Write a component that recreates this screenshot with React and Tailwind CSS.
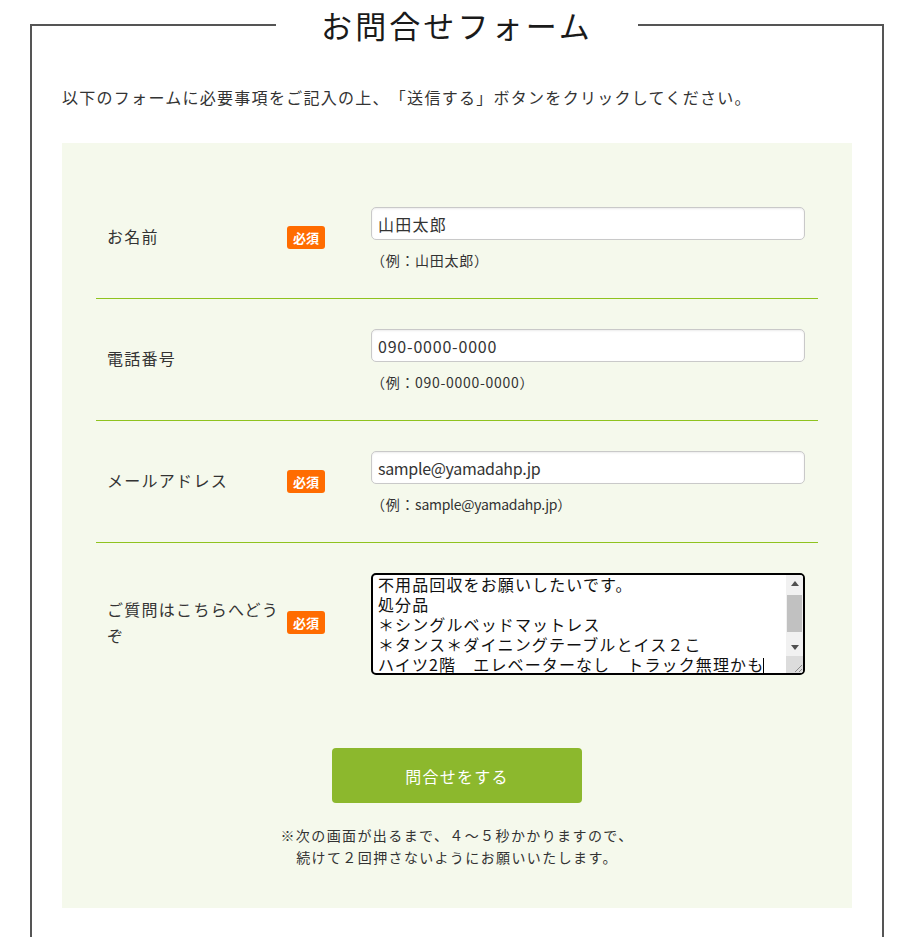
import React from "react";

const font = { fontFamily: '"Noto Sans CJK JP", "Noto Sans", sans-serif' };

function Badge() {
  return (
    <span className="inline-flex h-[23px] w-[38px] items-center justify-center rounded-[3px] bg-[#ff6c00] text-[13px] font-bold leading-none tracking-normal text-white">
      必須
    </span>
  );
}

function Row({ label, required, children, last }) {
  return (
    <div
      className={
        "flex items-center pt-[30px] pb-[28px] " +
        (last ? "" : "border-b border-[#8fc31f]")
      }
    >
      <div className="w-[191px] pl-[11px] pr-[4px] pb-[5px] text-[16px] leading-[26px] text-[#333]">
        {label}
      </div>
      <div className="w-[84px] pb-[5px]">{required ? <Badge /> : null}</div>
      <div className="w-[434px]">{children}</div>
    </div>
  );
}

function TextInput({ value, hint, inputTracking }) {
  return (
    <div>
      <input
        readOnly
        value={value}
        className={
          "block h-[33px] w-[434px] rounded-[5px] border border-[#c9c9c9] bg-white pl-[6px] text-[16px] text-[#333] shadow-[inset_0_1px_2px_rgba(0,0,0,0.08)] outline-none " +
          inputTracking
        }
      />
      <div className="mt-[10px] h-[20px] text-[14px] leading-[20px] tracking-[0.05em] text-[#333]">
        {hint}
      </div>
    </div>
  );
}

function FakeTextarea() {
  return (
    <div className="flex h-[102px] w-[434px] overflow-hidden rounded-[5px] border-2 border-black bg-white">
      <div className="flex-1 overflow-hidden pl-[5px]">
        <div className="-mt-px text-[16px] leading-[20px] tracking-[0.07em] text-[#111] whitespace-nowrap">
          <div>不用品回収をお願いしたいです。</div>
          <div>処分品</div>
          <div>＊シングルベッドマットレス</div>
          <div>＊タンス＊ダイニングテーブルとイス２こ</div>
          <div>
            ハイツ2階　エレベーターなし　トラック無理かも
            <span className="ml-[-1px] inline-block h-[18px] w-px bg-black align-middle" />
          </div>
        </div>
      </div>
      <div className="flex w-[17px] flex-col bg-[#f1f1f1]">
        <div className="flex h-[17px] items-center justify-center">
          <svg width="8" height="5" viewBox="0 0 8 5">
            <polygon points="4,0 8,5 0,5" fill="#505050" />
          </svg>
        </div>
        <div className="flex-1 px-[1px]">
          <div className="mt-[3px] h-[37px] bg-[#c1c1c1]" />
        </div>
        <div className="flex h-[17px] items-center justify-center">
          <svg width="8" height="5" viewBox="0 0 8 5">
            <polygon points="0,0 8,0 4,5" fill="#505050" />
          </svg>
        </div>
        <div className="flex h-[17px] items-end justify-end bg-[#dcdcdc]">
          <svg width="10" height="10" viewBox="0 0 10 10">
            <line x1="9" y1="2" x2="2" y2="9" stroke="#8a8a8a" strokeWidth="1" />
            <line x1="9" y1="6" x2="6" y2="9" stroke="#8a8a8a" strokeWidth="1" />
          </svg>
        </div>
      </div>
    </div>
  );
}

export default function App() {
  return (
    <div className="min-h-[937px] bg-white tracking-[0.08em]" style={font}>
      <fieldset className="ml-[30px] w-[854px] border-2 border-[#555] px-[30px] pb-[60px]">
        <legend className="mx-auto px-[45px] text-[31px] leading-[50px] tracking-[0.1em] text-[#1a1a1a]">
          お問合せフォーム
        </legend>
        <p className="mt-[34px] text-[16px] leading-[26px] tracking-[0.08em] text-[#333] [text-spacing-trim:space-all]">
          以下のフォームに必要事項をご記入の上、「送信する」ボタンをクリックしてください。
        </p>
        <div className="mt-[33px] bg-[#f5f9ec] px-[34px] pt-[34px] pb-[40px]">
          <Row label="お名前" required>
            <TextInput value="山田太郎" hint="（例：山田太郎）" inputTracking="tracking-[0.08em]" />
          </Row>
          <Row label="電話番号">
            <TextInput
              value="090-0000-0000"
              hint="（例：090-0000-0000）"
              inputTracking="tracking-[0.05em]"
            />
          </Row>
          <Row label="メールアドレス" required>
            <TextInput
              value="sample@yamadahp.jp"
              inputTracking="tracking-[-0.02em]"
              hint={
                <>
                  （例：<span className="tracking-[-0.02em]">sample@yamadahp.jp</span>）
                </>
              }
            />
          </Row>
          <Row label="ご質問はこちらへどうぞ" required last>
            <FakeTextarea />
          </Row>
          <div className="mt-[45px] flex justify-center">
            <button
              type="button"
              className="flex h-[55px] w-[250px] items-center justify-center rounded-[4px] bg-[#8cb82d] text-[16px] text-white"
            >
              問合せをする
            </button>
          </div>
          <p className="mt-[21px] text-center text-[14px] leading-[22px] tracking-[0.1em] text-[#333] [text-spacing-trim:space-all]">
            ※次の画面が出るまで、４～５秒かかりますので、
            <br />
            続けて２回押さないようにお願いいたします。
          </p>
        </div>
      </fieldset>
    </div>
  );
}
